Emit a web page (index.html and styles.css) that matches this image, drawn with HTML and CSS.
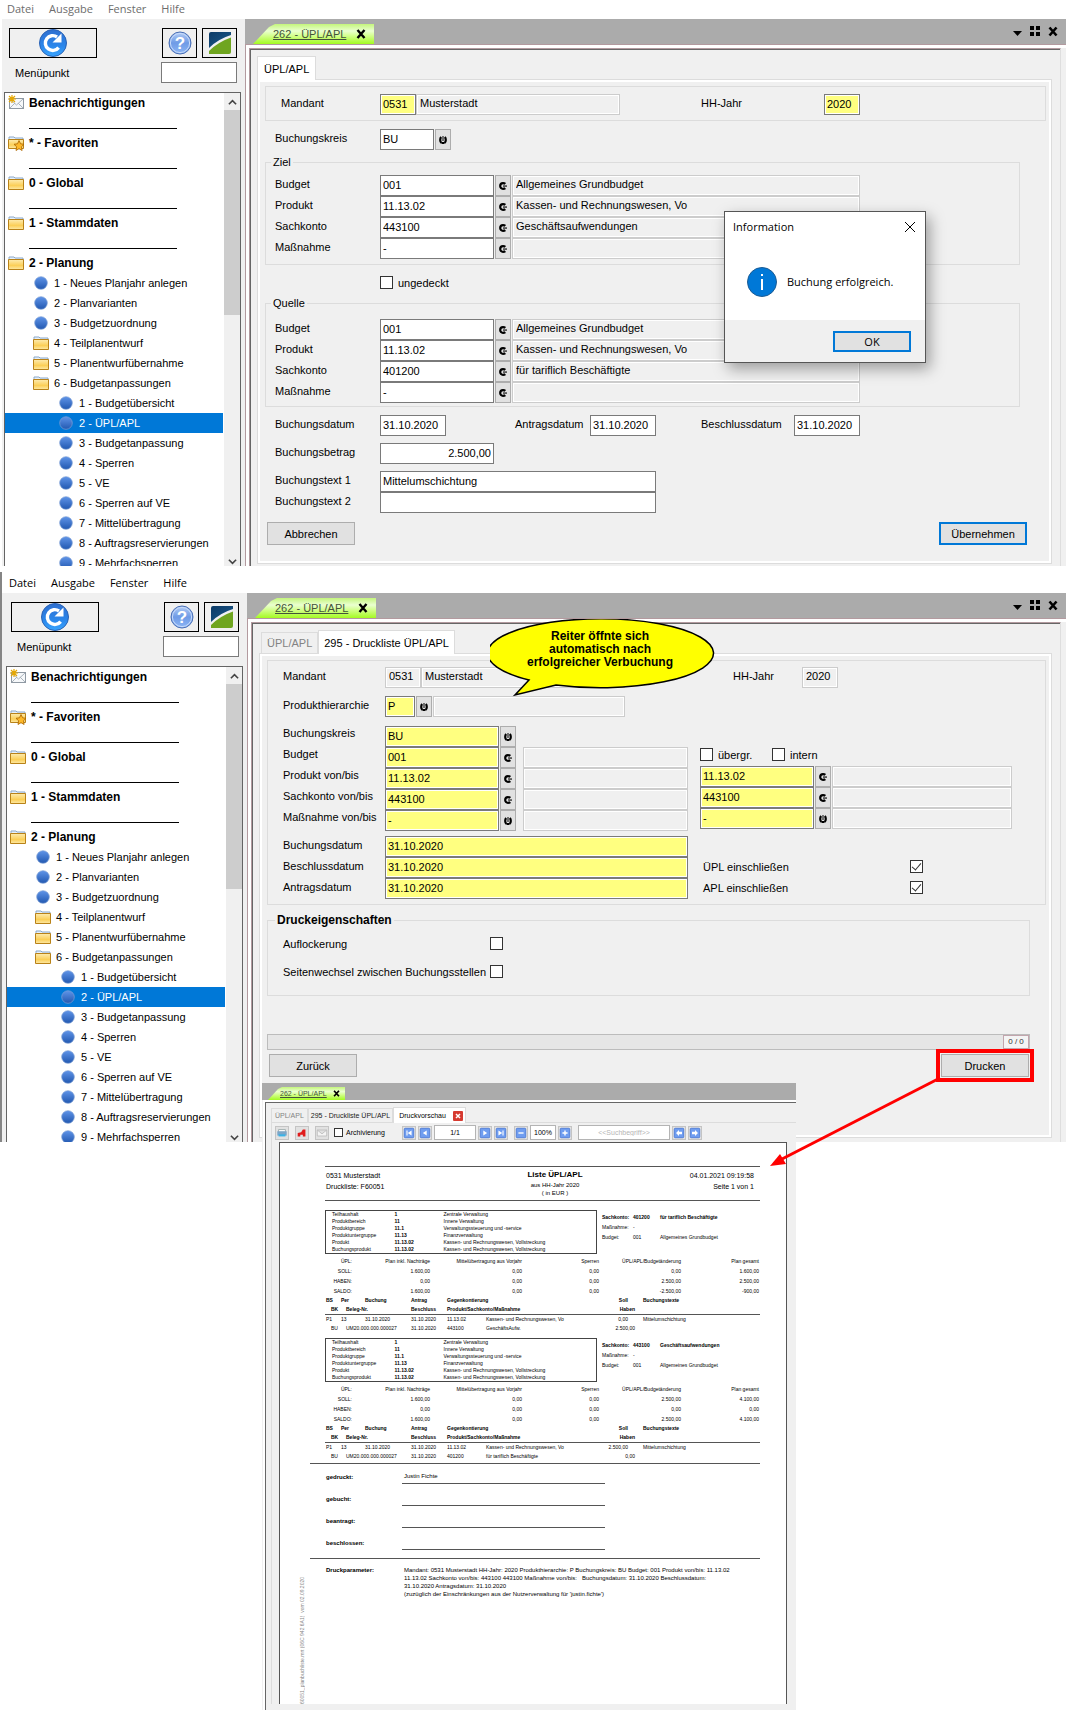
FILE: index.html
```html
<!DOCTYPE html>
<html lang="de">
<head>
<meta charset="utf-8">
<title>262 - ÜPL/APL</title>
<link rel="stylesheet" href="styles.css">
</head>
<body>
<svg class="sprite" aria-hidden="true">
  <defs>
    <linearGradient id="gBlue" x1="0" y1="0" x2="0" y2="1"><stop offset="0" stop-color="#2f6fd0"/><stop offset=".6" stop-color="#2b86ea"/><stop offset="1" stop-color="#39a5ff"/></linearGradient>
    <linearGradient id="gHelp" x1="0" y1="0" x2="0" y2="1"><stop offset="0" stop-color="#b4cdf5"/><stop offset=".5" stop-color="#6f9be6"/><stop offset="1" stop-color="#8db6f5"/></linearGradient>
    <linearGradient id="gBall" x1="0" y1="0" x2="0" y2="1"><stop offset="0" stop-color="#5f94e8"/><stop offset="1" stop-color="#2258b0"/></linearGradient>
    <linearGradient id="gFold" x1="0" y1="0" x2="0" y2="1"><stop offset="0" stop-color="#fdebb0"/><stop offset=".6" stop-color="#fbcf58"/><stop offset="1" stop-color="#fde9a6"/></linearGradient>
    <linearGradient id="gNavy" x1="0" y1="0" x2="1" y2="1"><stop offset="0" stop-color="#0c3a66"/><stop offset="1" stop-color="#1c5a8c"/></linearGradient>
  </defs>
  <symbol id="refresh" viewBox="0 0 28 28"><circle cx="14" cy="14" r="13.5" fill="url(#gBlue)" stroke="#2a62b4"/><path d="M19.600 18.600A7.400 7.400 0 1 1 18 8" fill="none" stroke="#fff" stroke-width="3.400"/><path d="M22.500 4.500v9h-9z" fill="#fff"/></symbol>
  <symbol id="logo" viewBox="0 0 24 24"><path d="M1 3q0-2 2-2h20v3Q10 8 1 17z" fill="url(#gNavy)"/><path d="M23 6.500v14.500q0 2-2 2H1v-3Q10 11 23 6.500z" fill="#6fa51f"/></symbol>
  <symbol id="mail" viewBox="0 0 16 16"><rect x="1.500" y="3.500" width="14" height="10" fill="#f6f8fa" stroke="#8f99a3"/><path d="M2 13l5-5M15 13l-5-5M2 4l6.500 6L15 4" fill="none" stroke="#aab3bc"/><path d="M4 0v8M0 4h8M1 1l6 6M7 1L1 7" stroke="#e6a700" stroke-width="1.200"/></symbol>
  <symbol id="folder" viewBox="0 0 16 16"><path d="M1 3.500V2h5l1 1h8v2H1z" fill="#e6f0fb" stroke="#8aa7c8"/><path d="M.5 4.500h15v10H.5z" fill="url(#gFold)" stroke="#b98218"/></symbol>
  <symbol id="favfolder" viewBox="0 0 16 16"><path d="M1 3.500V2h5l1 1h8v2H1z" fill="#e6f0fb" stroke="#8aa7c8"/><path d="M.5 4.500h15v9H.5z" fill="url(#gFold)" stroke="#b98218"/><path d="M11 5.500l1.600 3.300 3.400.5-2.500 2.400.6 3.800-3.100-1.800L8 15.500l.6-3.800L6 9.300l3.500-.5z" fill="#fdb92b" stroke="#a96400" stroke-width=".8"/></symbol>
  <symbol id="ball" viewBox="0 0 14 14"><circle cx="7" cy="7" r="6.300" fill="url(#gBall)" stroke="#7d9fd6" stroke-width=".7"/></symbol>
  <symbol id="up" viewBox="0 0 10 6"><path d="M1 5.500l4-4 4 4" fill="none" stroke="#444" stroke-width="1.800"/></symbol>
  <symbol id="down" viewBox="0 0 10 6"><path d="M1 .5l4 4 4-4" fill="none" stroke="#444" stroke-width="1.800"/></symbol>
  <symbol id="bandicons" viewBox="0 0 46 12"><path d="M0 5h9L4.500 10z"/><path d="M17 0h4v4h-4zM23 0h4v4h-4zM17 6h4v4h-4zM23 6h4v4h-4z"/><path d="M36.500 1.500l7 8M43.500 1.500l-7 8" stroke="#000" stroke-width="2.600"/></symbol>
  <symbol id="cross" viewBox="0 0 10 10"><path d="M1.500 1l7 8M8.500 1l-7 8" stroke="#000" stroke-width="2.400"/></symbol>
  <symbol id="lkright" viewBox="0 0 8 8"><path d="M6.300 1.900Q5.500 1.200 4 1.200A2.800 2.800 0 0 0 4 6.800Q5.500 6.800 6.300 6.100" fill="none" stroke="#000" stroke-width="2.200"/><path d="M4 3.500h4v1.100H4z"/></symbol>
  <symbol id="lkdown" viewBox="0 0 8 8"><path d="M2.200 1Q1.200 2 1.200 4T2.500 7M5.800 1Q6.800 2 6.800 4T5.500 7" fill="none" stroke="#000" stroke-width="2.200"/><path d="M3.500 0h1v5h-1zM2.500 6h3v2h-3z"/></symbol>
  <symbol id="printer" viewBox="0 0 14 14"><path d="M3 3h8v3H3z" fill="#fff" stroke="#9aa"/><path d="M1.500 5h11v5h-11z" fill="#7da6c8"/><path d="M3 8.500h8V11H3z" fill="#3bb3e6"/></symbol>
  <symbol id="pdf" viewBox="0 0 14 14"><path d="M2 11V7l4-1 2-3h3v8H8V9H5v2z" fill="#e01b1b"/></symbol>
  <symbol id="letter" viewBox="0 0 14 14"><path d="M1.500 3.500h11v7h-11zM1.500 3.500L7 8l5.500-4.500" fill="#f4f4f4" stroke="#bbb"/></symbol>
  <symbol id="first" viewBox="0 0 14 14"><rect x="1.500" y="1.500" width="11" height="11" rx="1" fill="#6f9df0" stroke="#4b7ad6"/><path d="M4 4h1.300v6H4zM10 4v6L5.500 7z" fill="#fff"/></symbol>
  <symbol id="prev" viewBox="0 0 14 14"><rect x="1.500" y="1.500" width="11" height="11" rx="1" fill="#6f9df0" stroke="#4b7ad6"/><path d="M9 4v6L4.500 7z" fill="#fff"/></symbol>
  <symbol id="next" viewBox="0 0 14 14"><rect x="1.500" y="1.500" width="11" height="11" rx="1" fill="#6f9df0" stroke="#4b7ad6"/><path d="M5 4v6l4.500-3z" fill="#fff"/></symbol>
  <symbol id="last" viewBox="0 0 14 14"><rect x="1.500" y="1.500" width="11" height="11" rx="1" fill="#6f9df0" stroke="#4b7ad6"/><path d="M8.700 4H10v6H8.700zM4 4v6l4.500-3z" fill="#fff"/></symbol>
  <symbol id="minus" viewBox="0 0 14 14"><rect x="1.500" y="1.500" width="11" height="11" rx="1" fill="#6f9df0" stroke="#4b7ad6"/><path d="M4 6.200h6v1.600H4z" fill="#fff"/></symbol>
  <symbol id="plus" viewBox="0 0 14 14"><rect x="1.500" y="1.500" width="11" height="11" rx="1" fill="#6f9df0" stroke="#4b7ad6"/><path d="M4 6.200h6v1.600H4zM6.200 4h1.600v6H6.200z" fill="#fff"/></symbol>
  <symbol id="left" viewBox="0 0 14 14"><rect x="1.500" y="1.500" width="11" height="11" rx="1" fill="#6f9df0" stroke="#4b7ad6"/><path d="M7 3.500v2h3.500v3H7v2L3.500 7z" fill="#fff"/></symbol>
  <symbol id="right" viewBox="0 0 14 14"><rect x="1.500" y="1.500" width="11" height="11" rx="1" fill="#6f9df0" stroke="#4b7ad6"/><path d="M7 3.500v2H3.500v3H7v2L10.500 7z" fill="#fff"/></symbol>
</svg>

<section class="window">
  <nav class="menubar menubar-dim"><a href="#">Datei</a><a href="#">Ausgabe</a><a href="#">Fenster</a><a href="#">Hilfe</a></nav>
  <div class="window-body">
    <aside class="sidebar">
      <div class="tools">
        <button class="tool tool-wide" aria-label="Aktualisieren"><svg class="i28"><use href="#refresh"/></svg></button>
        <button class="tool" aria-label="Hilfe"><svg class="i24" viewBox="0 0 24 24"><circle cx="12" cy="12" r="11" fill="url(#gHelp)" stroke="#4a6fb5"/><circle cx="12" cy="12" r="9.600" fill="none" stroke="#c9dcfa"/><text class="help-mark" x="12" y="18" text-anchor="middle">?</text></svg></button>
        <button class="tool" aria-label="Start"><svg class="i24"><use href="#logo"/></svg></button>
      </div>
      <div class="jump"><label for="mp1">Menüpunkt</label><input class="field" id="mp1"></div>
      <div class="tree">
        <ul>
          <li class="l1"><svg><use href="#mail"/></svg>Benachrichtigungen</li>
          <li class="rule"></li>
          <li class="l1"><svg><use href="#favfolder"/></svg>* - Favoriten</li>
          <li class="rule"></li>
          <li class="l1"><svg><use href="#folder"/></svg>0 - Global</li>
          <li class="rule"></li>
          <li class="l1"><svg><use href="#folder"/></svg>1 - Stammdaten</li>
          <li class="rule"></li>
          <li class="l1"><svg><use href="#folder"/></svg>2 - Planung</li>
          <li class="l2"><svg class="ball"><use href="#ball"/></svg>1 - Neues Planjahr anlegen</li>
          <li class="l2"><svg class="ball"><use href="#ball"/></svg>2 - Planvarianten</li>
          <li class="l2"><svg class="ball"><use href="#ball"/></svg>3 - Budgetzuordnung</li>
          <li class="l2"><svg><use href="#folder"/></svg>4 - Teilplanentwurf</li>
          <li class="l2"><svg><use href="#folder"/></svg>5 - Planentwurfübernahme</li>
          <li class="l2"><svg><use href="#folder"/></svg>6 - Budgetanpassungen</li>
          <li class="l3"><svg class="ball"><use href="#ball"/></svg>1 - Budgetübersicht</li>
          <li class="l3 selected"><svg class="ball"><use href="#ball"/></svg>2 - ÜPL/APL</li>
          <li class="l3"><svg class="ball"><use href="#ball"/></svg>3 - Budgetanpassung</li>
          <li class="l3"><svg class="ball"><use href="#ball"/></svg>4 - Sperren</li>
          <li class="l3"><svg class="ball"><use href="#ball"/></svg>5 - VE</li>
          <li class="l3"><svg class="ball"><use href="#ball"/></svg>6 - Sperren auf VE</li>
          <li class="l3"><svg class="ball"><use href="#ball"/></svg>7 - Mittelübertragung</li>
          <li class="l3"><svg class="ball"><use href="#ball"/></svg>8 - Auftragsreservierungen</li>
          <li class="l3"><svg class="ball"><use href="#ball"/></svg>9 - Mehrfachsperren</li>
        </ul>
        <div class="scrollbar"><svg><use href="#up"/></svg><div class="thumb"></div><svg class="sb-down"><use href="#down"/></svg></div>
      </div>
    </aside>
    <main class="main">
      <div class="band">
        <div class="doc-tab"><a href="#">262 - ÜPL/APL</a><svg><use href="#cross"/></svg></div>
        <svg class="band-icons"><use href="#bandicons"/></svg>
      </div>
      <div class="frame"><div class="frame-inner">
        <div class="tabs"><button class="tab active">ÜPL/APL</button></div>
        <form class="pane">
          <div class="group row">
            <label class="lab99" for="a1">Mandant</label><input class="field yellow w36" id="a1" value="0531"><input class="field ro w204" aria-label="Mandant Name" readonly value="Musterstadt">
            <label class="lab-hh" for="a2">HH-Jahr</label><input class="field yellow w36" id="a2" value="2020">
          </div>
          <div class="row inset mt8"><label class="lab105" for="a3">Buchungskreis</label><input class="field w54" id="a3" value="BU"><button type="button" class="look" aria-label="Auswahl"><svg><use href="#lkdown"/></svg></button></div>
          <fieldset class="mt5">
            <legend>Ziel</legend>
            <div class="row"><label class="lab105" for="b1">Budget</label><input class="field w114" id="b1" value="001"><button type="button" class="look" aria-label="Suchen"><svg><use href="#lkright"/></svg></button><input class="field ro w348" aria-label="Budget Text" readonly value="Allgemeines Grundbudget"></div>
            <div class="row"><label class="lab105" for="b2">Produkt</label><input class="field w114" id="b2" value="11.13.02"><button type="button" class="look" aria-label="Suchen"><svg><use href="#lkright"/></svg></button><input class="field ro w348" aria-label="Produkt Text" readonly value="Kassen- und Rechnungswesen, Vo"></div>
            <div class="row"><label class="lab105" for="b3">Sachkonto</label><input class="field w114" id="b3" value="443100"><button type="button" class="look" aria-label="Suchen"><svg><use href="#lkright"/></svg></button><input class="field ro w348" aria-label="Sachkonto Text" readonly value="Geschäftsaufwendungen"></div>
            <div class="row"><label class="lab105" for="b4">Maßnahme</label><input class="field w114" id="b4" value="-"><button type="button" class="look" aria-label="Suchen"><svg><use href="#lkright"/></svg></button><input class="field ro w348" aria-label="Maßnahme Text" readonly></div>
          </fieldset>
          <div class="uncovered"><label class="check"><input type="checkbox">ungedeckt</label></div>
          <fieldset class="source">
            <legend>Quelle</legend>
            <div class="row"><label class="lab105" for="c1">Budget</label><input class="field w114" id="c1" value="001"><button type="button" class="look" aria-label="Suchen"><svg><use href="#lkright"/></svg></button><input class="field ro w348" aria-label="Budget Text" readonly value="Allgemeines Grundbudget"></div>
            <div class="row"><label class="lab105" for="c2">Produkt</label><input class="field w114" id="c2" value="11.13.02"><button type="button" class="look" aria-label="Suchen"><svg><use href="#lkright"/></svg></button><input class="field ro w348" aria-label="Produkt Text" readonly value="Kassen- und Rechnungswesen, Vo"></div>
            <div class="row"><label class="lab105" for="c3">Sachkonto</label><input class="field w114" id="c3" value="401200"><button type="button" class="look" aria-label="Suchen"><svg><use href="#lkright"/></svg></button><input class="field ro w348" aria-label="Sachkonto Text" readonly value="für tariflich Beschäftigte"></div>
            <div class="row"><label class="lab105" for="c4">Maßnahme</label><input class="field w114" id="c4" value="-"><button type="button" class="look" aria-label="Suchen"><svg><use href="#lkright"/></svg></button><input class="field ro w348" aria-label="Maßnahme Text" readonly></div>
          </fieldset>
          <div class="row inset mt8">
            <label class="lab105" for="d1">Buchungsdatum</label><input class="field w66" id="d1" value="31.10.2020">
            <label class="lab-antrag" for="d2">Antragsdatum</label><input class="field w66" id="d2" value="31.10.2020">
            <label class="lab-beschl" for="d3">Beschlussdatum</label><input class="field w66" id="d3" value="31.10.2020">
          </div>
          <div class="row inset mt7"><label class="lab105" for="d4">Buchungsbetrag</label><input class="field w114 num" id="d4" value="2.500,00"></div>
          <div class="row inset mt7"><label class="lab105" for="d5">Buchungstext 1</label><input class="field w276" id="d5" value="Mittelumschichtung"></div>
          <div class="row inset"><label class="lab105" for="d6">Buchungstext 2</label><input class="field w276" id="d6"></div>
          <div class="actions"><button type="button" class="btn">Abbrechen</button><button type="button" class="btn primary">Übernehmen</button></div>
        </form>
      </div></div>
      <section class="dialog" role="dialog" aria-label="Information">
        <header><span>Information</span><button class="dialog-close" aria-label="Schließen"><svg viewBox="0 0 12 12"><path d="M1 1l10 10M11 1L1 11" stroke="#000"/></svg></button></header>
        <div class="dialog-text"><svg viewBox="0 0 30 30"><circle cx="15" cy="15" r="14.500" fill="#0078d7" stroke="#1d5c93"/><path d="M14 12h2v11h-2zM14 7h2v2h-2z" fill="#fff"/></svg><p>Buchung erfolgreich.</p></div>
        <footer><button class="btn primary ok">OK</button></footer>
      </section>
    </main>
  </div>
</section>

<section class="window second">
  <nav class="menubar"><a href="#">Datei</a><a href="#">Ausgabe</a><a href="#">Fenster</a><a href="#">Hilfe</a></nav>
  <div class="window-body">
    <aside class="sidebar">
      <div class="tools">
        <button class="tool tool-wide" aria-label="Aktualisieren"><svg class="i28"><use href="#refresh"/></svg></button>
        <button class="tool" aria-label="Hilfe"><svg class="i24" viewBox="0 0 24 24"><circle cx="12" cy="12" r="11" fill="url(#gHelp)" stroke="#4a6fb5"/><circle cx="12" cy="12" r="9.600" fill="none" stroke="#c9dcfa"/><text class="help-mark" x="12" y="18" text-anchor="middle">?</text></svg></button>
        <button class="tool" aria-label="Start"><svg class="i24"><use href="#logo"/></svg></button>
      </div>
      <div class="jump"><label for="mp2">Menüpunkt</label><input class="field" id="mp2"></div>
      <div class="tree">
        <ul>
          <li class="l1"><svg><use href="#mail"/></svg>Benachrichtigungen</li>
          <li class="rule"></li>
          <li class="l1"><svg><use href="#favfolder"/></svg>* - Favoriten</li>
          <li class="rule"></li>
          <li class="l1"><svg><use href="#folder"/></svg>0 - Global</li>
          <li class="rule"></li>
          <li class="l1"><svg><use href="#folder"/></svg>1 - Stammdaten</li>
          <li class="rule"></li>
          <li class="l1"><svg><use href="#folder"/></svg>2 - Planung</li>
          <li class="l2"><svg class="ball"><use href="#ball"/></svg>1 - Neues Planjahr anlegen</li>
          <li class="l2"><svg class="ball"><use href="#ball"/></svg>2 - Planvarianten</li>
          <li class="l2"><svg class="ball"><use href="#ball"/></svg>3 - Budgetzuordnung</li>
          <li class="l2"><svg><use href="#folder"/></svg>4 - Teilplanentwurf</li>
          <li class="l2"><svg><use href="#folder"/></svg>5 - Planentwurfübernahme</li>
          <li class="l2"><svg><use href="#folder"/></svg>6 - Budgetanpassungen</li>
          <li class="l3"><svg class="ball"><use href="#ball"/></svg>1 - Budgetübersicht</li>
          <li class="l3 selected"><svg class="ball"><use href="#ball"/></svg>2 - ÜPL/APL</li>
          <li class="l3"><svg class="ball"><use href="#ball"/></svg>3 - Budgetanpassung</li>
          <li class="l3"><svg class="ball"><use href="#ball"/></svg>4 - Sperren</li>
          <li class="l3"><svg class="ball"><use href="#ball"/></svg>5 - VE</li>
          <li class="l3"><svg class="ball"><use href="#ball"/></svg>6 - Sperren auf VE</li>
          <li class="l3"><svg class="ball"><use href="#ball"/></svg>7 - Mittelübertragung</li>
          <li class="l3"><svg class="ball"><use href="#ball"/></svg>8 - Auftragsreservierungen</li>
          <li class="l3"><svg class="ball"><use href="#ball"/></svg>9 - Mehrfachsperren</li>
        </ul>
        <div class="scrollbar"><svg><use href="#up"/></svg><div class="thumb"></div><svg class="sb-down"><use href="#down"/></svg></div>
      </div>
    </aside>
    <main class="main">
      <div class="band">
        <div class="doc-tab"><a href="#">262 - ÜPL/APL</a><svg><use href="#cross"/></svg></div>
        <svg class="band-icons"><use href="#bandicons"/></svg>
      </div>
      <div class="frame"><div class="frame-inner">
        <div class="tabs"><button class="tab">ÜPL/APL</button><button class="tab active">295 - Druckliste ÜPL/APL</button></div>
        <form class="pane print-pane">
          <div class="group">
            <div class="row"><label class="lab102" for="e1">Mandant</label><input class="field ro w36" id="e1" readonly value="0531"><input class="field ro w204" aria-label="Mandant Name" readonly value="Musterstadt"><label class="lab-hh2" for="e2">HH-Jahr</label><input class="field ro w36" id="e2" readonly value="2020"></div>
            <div class="row mt8"><label class="lab102" for="e3">Produkthierarchie</label><input class="field yellow w30" id="e3" value="P"><button type="button" class="look" aria-label="Auswahl"><svg><use href="#lkdown"/></svg></button><input class="field ro w192" aria-label="Produkthierarchie Text" readonly></div>
            <div class="columns">
              <div class="col-left">
                <div class="row tight"><label class="lab102" for="f1">Buchungskreis</label><input class="field yellow w114" id="f1" value="BU"><button type="button" class="look" aria-label="Auswahl"><svg><use href="#lkdown"/></svg></button></div>
                <div class="row tight"><label class="lab102" for="f2">Budget</label><input class="field yellow w114" id="f2" value="001"><button type="button" class="look" aria-label="Suchen"><svg><use href="#lkright"/></svg></button><input class="field ro spaced" aria-label="Budget Text" readonly></div>
                <div class="row tight"><label class="lab102" for="f3">Produkt von/bis</label><input class="field yellow w114" id="f3" value="11.13.02"><button type="button" class="look" aria-label="Suchen"><svg><use href="#lkright"/></svg></button><input class="field ro spaced" aria-label="Produkt Text" readonly></div>
                <div class="row tight"><label class="lab102" for="f4">Sachkonto von/bis</label><input class="field yellow w114" id="f4" value="443100"><button type="button" class="look" aria-label="Suchen"><svg><use href="#lkright"/></svg></button><input class="field ro spaced" aria-label="Sachkonto Text" readonly></div>
                <div class="row tight"><label class="lab102" for="f5">Maßnahme von/bis</label><input class="field yellow w114" id="f5" value="-"><button type="button" class="look" aria-label="Auswahl"><svg><use href="#lkdown"/></svg></button><input class="field ro spaced" aria-label="Maßnahme Text" readonly></div>
                <div class="row mt5"><label class="lab102" for="f6">Buchungsdatum</label><input class="field yellow grow" id="f6" value="31.10.2020"></div>
                <div class="row"><label class="lab102" for="f7">Beschlussdatum</label><input class="field yellow grow" id="f7" value="31.10.2020"></div>
                <div class="row"><label class="lab102" for="f8">Antragsdatum</label><input class="field yellow grow" id="f8" value="31.10.2020"></div>
              </div>
              <div class="col-right">
                <div class="checks"><label class="check"><input type="checkbox">übergr.</label><label class="check"><input type="checkbox">intern</label></div>
                <div class="row"><input class="field yellow w114" aria-label="Produkt bis" value="11.13.02"><button type="button" class="look" aria-label="Suchen"><svg><use href="#lkright"/></svg></button><input class="field ro grow" aria-label="Produkt bis Text" readonly></div>
                <div class="row"><input class="field yellow w114" aria-label="Sachkonto bis" value="443100"><button type="button" class="look" aria-label="Suchen"><svg><use href="#lkright"/></svg></button><input class="field ro grow" aria-label="Sachkonto bis Text" readonly></div>
                <div class="row"><input class="field yellow w114" aria-label="Maßnahme bis" value="-"><button type="button" class="look" aria-label="Auswahl"><svg><use href="#lkdown"/></svg></button><input class="field ro grow" aria-label="Maßnahme bis Text" readonly></div>
                <div class="includes">
                  <div class="include"><label for="g1">ÜPL einschließen</label><input type="checkbox" id="g1" checked></div>
                  <div class="include"><label for="g2">APL einschließen</label><input type="checkbox" id="g2" checked></div>
                </div>
              </div>
            </div>
          </div>
          <fieldset class="print-options">
            <legend>Druckeigenschaften</legend>
            <div class="option"><label for="h1">Auflockerung</label><input type="checkbox" id="h1"></div>
            <div class="option"><label for="h2">Seitenwechsel zwischen Buchungsstellen</label><input type="checkbox" id="h2"></div>
          </fieldset>
          <div class="progress"><progress value="0" max="1" aria-label="Fortschritt"></progress><output>0 / 0</output></div>
          <div class="actions"><button type="button" class="btn">Zurück</button>
            <div class="marked"><button type="button" class="btn">Drucken</button>
              <svg class="arrow" viewBox="0 0 172 92"><path d="M170 3L14 83" stroke="#f00" stroke-width="3"/><path d="M2 90l10-12 6 10z" fill="#f00"/></svg>
            </div>
          </div>
        </form>
      </div></div>
      <div class="callout">
        <svg viewBox="0 0 230 80"><path d="M39 61L25 76L66 66A113 34.500 0 1 0 39 61z" fill="#ff0" stroke="#000" stroke-width="1.500"/></svg>
        <p>Reiter öffnte sich<br>automatisch nach<br>erfolgreicher Verbuchung</p>
      </div>
    </main>
  </div>
</section>

<section class="preview">
  <div class="band"><div class="doc-tab"><a href="#">262 - ÜPL/APL</a><svg><use href="#cross"/></svg></div></div>
  <div class="preview-frame">
    <div class="tabs"><button class="tab">ÜPL/APL</button><button class="tab dark">295 - Druckliste ÜPL/APL</button><button class="tab active">Druckvorschau<svg viewBox="0 0 10 10"><rect width="10" height="10" rx="1" fill="#d63a30"/><path d="M3 3l4 4M7 3L3 7" stroke="#fff" stroke-width="1.500"/></svg></button></div>
    <div class="preview-pane">
      <div class="toolbar">
        <div class="tb-files">
          <button aria-label="Drucken"><svg><use href="#printer"/></svg></button><button aria-label="PDF"><svg><use href="#pdf"/></svg></button><button aria-label="E-Mail"><svg><use href="#letter"/></svg></button>
        </div>
        <label class="check small"><input type="checkbox">Archivierung</label>
        <div class="tb-set"><button aria-label="Erste Seite"><svg><use href="#first"/></svg></button><button aria-label="Vorherige Seite"><svg><use href="#prev"/></svg></button><input class="tb-page" aria-label="Seite" value="1/1"><button aria-label="Nächste Seite"><svg><use href="#next"/></svg></button><button aria-label="Letzte Seite"><svg><use href="#last"/></svg></button></div>
        <div class="tb-set"><button aria-label="Verkleinern"><svg><use href="#minus"/></svg></button><input class="tb-zoom" aria-label="Zoom" value="100%"><button aria-label="Vergrößern"><svg><use href="#plus"/></svg></button></div>
        <div class="tb-set"><input class="tb-search" aria-label="Suchbegriff" placeholder="&lt;&lt;Suchbegriff&gt;&gt;"><button aria-label="Zurück suchen"><svg><use href="#left"/></svg></button><button aria-label="Weiter suchen"><svg><use href="#right"/></svg></button></div>
      </div>
      <article class="sheet">
        <div class="stamp">60051_planbuchliste.mrt (06C 942 6A1)&nbsp; vom 02.09.2020</div>
        <div class="sheet-content">
          <header class="report-head">
            <div>0531 Musterstadt<br>Druckliste: F60051</div>
            <div class="report-title"><h1>Liste ÜPL/APL</h1><p>aus HH-Jahr 2020<br>( in EUR )</p></div>
            <div class="right">04.01.2021 09:19:58<br>Seite 1 von 1</div>
          </header>

          <section class="entry">
            <div class="entry-head">
              <table class="budget">
                <colgroup><col class="b1"><col class="b2"><col></colgroup>
                <tr><td>Teilhaushalt</td><th>1</th><td>Zentrale Verwaltung</td></tr>
                <tr><td>Produktbereich</td><th>11</th><td>Innere Verwaltung</td></tr>
                <tr><td>Produktgruppe</td><th>11.1</th><td>Verwaltungssteuerung und -service</td></tr>
                <tr><td>Produktuntergruppe</td><th>11.13</th><td>Finanzverwaltung</td></tr>
                <tr><td>Produkt</td><th>11.13.02</th><td>Kassen- und Rechnungswesen, Vollstreckung</td></tr>
                <tr><td>Buchungsprodukt</td><th>11.13.02</th><td>Kassen- und Rechnungswesen, Vollstreckung</td></tr>
              </table>
              <table class="account">
                <colgroup><col class="a1"><col class="a2"><col></colgroup>
                <tr><th>Sachkonto:</th><th>401200</th><th>für tariflich Beschäftigte</th></tr>
                <tr><td>Maßnahme:</td><td>-</td><td></td></tr>
                <tr><td>Budget:</td><td>001</td><td>Allgemeines Grundbudget</td></tr>
              </table>
            </div>
            <table class="sums">
              <colgroup><col class="s1"><col class="s2"><col class="s3"><col class="s4"><col class="s5"><col></colgroup>
              <tr><td>ÜPL:</td><td>Plan inkl. Nachträge</td><td>Mittelübertragung aus Vorjahr</td><td>Sperren</td><td>ÜPL/APL/Budgetänderung</td><td>Plan gesamt</td></tr>
              <tr><td>SOLL:</td><td>1.600,00</td><td>0,00</td><td>0,00</td><td>0,00</td><td>1.600,00</td></tr>
              <tr><td>HABEN:</td><td>0,00</td><td>0,00</td><td>0,00</td><td>2.500,00</td><td>2.500,00</td></tr>
              <tr><td>SALDO:</td><td>1.600,00</td><td>0,00</td><td>0,00</td><td>-2.500,00</td><td>-900,00</td></tr>
            </table>
            <table class="bookings">
              <colgroup><col class="k1"><col class="k2"><col class="k3"><col class="k4"><col class="k5"><col class="k6"><col class="k7"><col></colgroup>
              <thead>
                <tr><th>BS</th><th>Per</th><th>Buchung</th><th>Antrag</th><th colspan="2">Gegenkontierung</th><th class="debit">Soll</th><th>Buchungstexte</th></tr>
                <tr><th class="sub">BK</th><th class="sub" colspan="2">Beleg-Nr.</th><th>Beschluss</th><th colspan="2">Produkt/Sachkonto/Maßnahme</th><th class="credit">Haben</th><th></th></tr>
              </thead>
              <tbody>
                <tr><td>P1</td><td>13</td><td>31.10.2020</td><td>31.10.2020</td><td>11.13.02</td><td>Kassen- und Rechnungswesen, Vo</td><td class="debit">0,00</td><td>Mittelumschichtung</td></tr>
                <tr><td class="sub">BU</td><td class="sub" colspan="2">UM20.000.000.000027</td><td>31.10.2020</td><td>443100</td><td>GeschäftsAufw.</td><td class="credit">2.500,00</td><td></td></tr>
              </tbody>
            </table>
          </section>

          <section class="entry">
            <div class="entry-head">
              <table class="budget">
                <colgroup><col class="b1"><col class="b2"><col></colgroup>
                <tr><td>Teilhaushalt</td><th>1</th><td>Zentrale Verwaltung</td></tr>
                <tr><td>Produktbereich</td><th>11</th><td>Innere Verwaltung</td></tr>
                <tr><td>Produktgruppe</td><th>11.1</th><td>Verwaltungssteuerung und -service</td></tr>
                <tr><td>Produktuntergruppe</td><th>11.13</th><td>Finanzverwaltung</td></tr>
                <tr><td>Produkt</td><th>11.13.02</th><td>Kassen- und Rechnungswesen, Vollstreckung</td></tr>
                <tr><td>Buchungsprodukt</td><th>11.13.02</th><td>Kassen- und Rechnungswesen, Vollstreckung</td></tr>
              </table>
              <table class="account">
                <colgroup><col class="a1"><col class="a2"><col></colgroup>
                <tr><th>Sachkonto:</th><th>443100</th><th>Geschäftsaufwendungen</th></tr>
                <tr><td>Maßnahme:</td><td>-</td><td></td></tr>
                <tr><td>Budget:</td><td>001</td><td>Allgemeines Grundbudget</td></tr>
              </table>
            </div>
            <table class="sums">
              <colgroup><col class="s1"><col class="s2"><col class="s3"><col class="s4"><col class="s5"><col></colgroup>
              <tr><td>ÜPL:</td><td>Plan inkl. Nachträge</td><td>Mittelübertragung aus Vorjahr</td><td>Sperren</td><td>ÜPL/APL/Budgetänderung</td><td>Plan gesamt</td></tr>
              <tr><td>SOLL:</td><td>1.600,00</td><td>0,00</td><td>0,00</td><td>2.500,00</td><td>4.100,00</td></tr>
              <tr><td>HABEN:</td><td>0,00</td><td>0,00</td><td>0,00</td><td>0,00</td><td>0,00</td></tr>
              <tr><td>SALDO:</td><td>1.600,00</td><td>0,00</td><td>0,00</td><td>2.500,00</td><td>4.100,00</td></tr>
            </table>
            <table class="bookings">
              <colgroup><col class="k1"><col class="k2"><col class="k3"><col class="k4"><col class="k5"><col class="k6"><col class="k7"><col></colgroup>
              <thead>
                <tr><th>BS</th><th>Per</th><th>Buchung</th><th>Antrag</th><th colspan="2">Gegenkontierung</th><th class="debit">Soll</th><th>Buchungstexte</th></tr>
                <tr><th class="sub">BK</th><th class="sub" colspan="2">Beleg-Nr.</th><th>Beschluss</th><th colspan="2">Produkt/Sachkonto/Maßnahme</th><th class="credit">Haben</th><th></th></tr>
              </thead>
              <tbody>
                <tr><td>P1</td><td>13</td><td>31.10.2020</td><td>31.10.2020</td><td>11.13.02</td><td>Kassen- und Rechnungswesen, Vo</td><td class="debit">2.500,00</td><td>Mittelumschichtung</td></tr>
                <tr><td class="sub">BU</td><td class="sub" colspan="2">UM20.000.000.000027</td><td>31.10.2020</td><td>401200</td><td>für tariflich Beschäftigte</td><td class="credit">0,00</td><td></td></tr>
              </tbody>
            </table>
          </section>

          <dl class="signatures">
            <dt>gedruckt:</dt><dd>Justin Fichte</dd>
            <dt>gebucht:</dt><dd></dd>
            <dt>beantragt:</dt><dd></dd>
            <dt>beschlossen:</dt><dd></dd>
          </dl>
          <footer class="params">
            <strong>Druckparameter:</strong>
            <p>Mandant: 0531 Musterstadt HH-Jahr: 2020 Produkthierarchie: P Buchungskreis: BU Budget: 001 Produkt von/bis: 11.13.02<br>11.13.02 Sachkonto von/bis: 443100 443100 Maßnahme von/bis: &nbsp; Buchungsdatum: 31.10.2020 Beschlussdatum:<br>31.10.2020 Antragsdatum: 31.10.2020<br>(zuzüglich der Einschränkungen aus der Nutzerverwaltung für 'justin.fichte')</p>
          </footer>
        </div>
      </article>
    </div>
  </div>
</section>
</body>
</html>
```
FILE: styles.css
```css
* { box-sizing: border-box; }

body {
  margin: 0;
  background: #fff;
  color: #000;
  font: 11px/14px "Liberation Sans", Arial, sans-serif;
}

.sprite { position: absolute; width: 0; height: 0; }
svg { display: block; flex: none; }
button, input { font: inherit; color: inherit; margin: 0; }
button { padding: 0; }
p, dl, dd, h1 { margin: 0; }

/* ---------- window ---------- */
.window { border-left: 2px solid #fff; }
.second { margin-top: 6px; border-left-color: #858585; }

.menubar {
  display: flex;
  gap: 15px;
  height: 19px;
  padding-left: 5px;
  font: 11px/18px "Open Sans", "Noto Sans", sans-serif;
}
.second .menubar { height: 21px; padding: 2px 0 0 7px; }
.menubar a { color: #000; text-decoration: none; }
.menubar-dim a { color: #6d6d6d; }

.window-body { display: flex; background: #f0f0f0; }

/* ---------- sidebar ---------- */
.sidebar { display: flex; flex-direction: column; flex: none; width: 243px; padding-top: 9px; }
.second .sidebar { width: 245px; padding-left: 2px; }

.tools { display: flex; gap: 5px; padding: 0 8px 0 7px; }
.tool {
  display: flex;
  align-items: center;
  justify-content: center;
  width: 35px;
  height: 30px;
  border: 1px solid #000;
  background: #f0f0f0;
}
.tool-wide { width: 88px; margin-right: auto; padding-right: 1px; }
.i28 { width: 28px; height: 28px; }
.i24 { width: 24px; height: 24px; }
.help-mark { fill: #fff; font-size: 17px; font-weight: bold; }

.jump { display: flex; justify-content: space-between; padding: 4px 8px 8px 13px; }
.jump label { padding-top: 1px; line-height: 21px; }
.jump .field { width: 76px; }

.tree {
  display: flex;
  flex: 1;
  contain: size;
  overflow: hidden;
  margin: 0 4px 0 2px;
  border: 1px solid #646464;
  border-bottom: 0;
  background: #fff;
}
.tree ul { flex: 1; margin: 0 1px 0 0; padding: 0; list-style: none; }
.tree li { display: flex; align-items: center; gap: 5px; height: 20px; white-space: nowrap; }
.tree svg { width: 16px; height: 16px; }
.tree .ball { width: 14px; height: 14px; margin: 0 1px; }
.tree .l1 { padding-left: 3px; font-size: 12px; font-weight: bold; }
.tree .l2 { padding-left: 28px; }
.tree .l3 { padding-left: 53px; }
.tree .rule { width: 148px; height: 16px; margin: 0 0 4px 24px; border-bottom: 1px solid #000; }
.tree .selected { background: #0078d7; color: #fff; }

.scrollbar { display: flex; flex-direction: column; align-items: center; width: 16px; background: #f0f0f0; }
.scrollbar svg { width: 9px; height: 6px; margin: 6px 0 5px; }
.scrollbar .thumb { width: 100%; height: 205px; background: #cdcdcd; }
.scrollbar .sb-down { margin: auto 0 1px; }

/* ---------- main area ---------- */
.main { position: relative; flex: 1; min-width: 0; }

.band { display: flex; align-items: flex-end; justify-content: space-between; height: 25px; padding: 0 8px; background: #ababab; }
.band-icons { width: 46px; height: 12px; margin: 0 -1px 6px 0; }
.doc-tab {
  display: flex;
  align-items: center;
  justify-content: space-between;
  width: 121px;
  height: 20px;
  padding: 0 8px 0 20px;
  background: linear-gradient(#c4f57c, #eaffd0 35%, #d2ff8a 60%, #a4fb22);
  clip-path: polygon(0 100%, 16px 3px, 22px 0, 100% 0, 100% 100%);
}
.doc-tab a { color: #44533a; }
.doc-tab svg { width: 10px; height: 10px; }

.frame {
  padding: 3px 5px 0 3px;
  border: solid #b39a9f;
  border-width: 1px 0 0 1px;
  box-shadow: inset 3px 3px 0 #fff;
}
.frame-inner {
  padding: 7px 8px 2px 7px;
  border: 1px solid #b39a9f;
  border-right-color: #dedede;
  border-bottom: 0;
  box-shadow: inset 1px 1px 0 #666;
}
.second .frame-inner { padding-bottom: 4px; }

.tabs { display: flex; align-items: flex-end; }
.tab {
  height: 21px;
  margin-left: 2px;
  padding: 0 5px;
  border: 1px solid #dcdcdc;
  border-bottom: 0;
  background: #f0f0f0;
  color: #838383;
  white-space: nowrap;
}
.tab.active { position: relative; height: 24px; margin: 0 0 -1px; padding: 0 6px; background: #fff; color: #000; }
.second .tab.active { padding: 0 5px; }

.pane {
  padding: 6px 5px 18px 7px;
  border: 1px solid #dcdcdc;
  box-shadow: inset 0 0 0 2px #fff;
}
.print-pane { padding-bottom: 60px; }

/* ---------- form parts ---------- */
.group, fieldset { border: 1px solid #dcdcdc; }
.group { padding: 7px 15px 5px; }
.print-pane .group { padding-top: 6px; }

fieldset { min-width: 0; margin: 0 26px 0 0; padding: 6px 9px 5px; }
fieldset.source { margin-top: 7px; padding: 9px 9px 3px; }
legend { height: 14px; margin-left: -4px; padding: 0 2px; }

.row { display: flex; align-items: flex-start; }
.row label { flex: none; line-height: 18px; white-space: nowrap; }
.row.tight label { line-height: 14px; }
.inset { padding-left: 10px; }
.mt5 { margin-top: 5px; }
.mt7 { margin-top: 7px; }
.mt8 { margin-top: 8px; }
.lab99 { width: 99px; }
.lab102 { width: 102px; }
.lab105 { width: 105px; }
.lab-hh { width: 123px; margin-left: 81px; }
.lab-hh2 { width: 69px; margin-left: 108px; }
.lab-antrag { width: 75px; margin-left: 69px; }
.lab-beschl { width: 93px; margin-left: 45px; }

.field {
  flex: none;
  height: 21px;
  padding: 0 2px 2px;
  border: 1px solid #7a7a7a;
  border-radius: 0;
  background: #fff;
  outline: none;
}
.yellow { background: #ffff80; box-shadow: inset 0 0 0 1px #fff; }
.ro { padding: 0 3px 3px; border-color: #ccc; background: #f0f0f0; box-shadow: inset 0 0 0 1px #fff; }
.num { text-align: right; }
.w30 { width: 30px; }
.w36 { width: 36px; }
.w54 { width: 54px; }
.w66 { width: 66px; }
.w114 { width: 114px; }
.w192 { width: 192px; }
.w204 { width: 204px; }
.w276 { width: 276px; }
.w348 { width: 348px; }
.grow { flex: 1; min-width: 0; }
.spaced { flex: 1; min-width: 0; margin-left: 6px; }

.look {
  display: flex;
  align-items: center;
  justify-content: center;
  flex: none;
  width: 16px;
  height: 21px;
  margin: 0 1px;
  border: 1px solid #adadad;
  background: #e1e1e1;
}
.look svg { width: 8px; height: 8px; }

input[type="checkbox"] {
  appearance: none;
  display: flex;
  justify-content: center;
  flex: none;
  width: 13px;
  height: 13px;
  border: 1px solid #333;
  background: #fff;
}
input[type="checkbox"]:checked::after {
  content: "";
  width: 4px;
  height: 8px;
  border: solid #333;
  border-width: 0 1px 1px 0;
  transform: rotate(40deg);
}
.check { display: flex; align-items: center; gap: 5px; height: 13px; }
.uncovered { display: flex; margin-top: 11px; padding-left: 115px; }

.btn { width: 88px; height: 23px; border: 1px solid #adadad; background: #e1e1e1; }
.btn.primary { border: 2px solid #0078d7; }
.actions { display: flex; justify-content: space-between; margin-top: 9px; padding: 0 19px 0 2px; }
.print-pane .actions { margin-top: 4px; padding-right: 17px; }

.columns { display: flex; gap: 12px; margin-top: 9px; }
.col-left { flex: none; width: 405px; }
.col-right { flex: 1; max-width: 312px; padding-top: 22px; }
.checks { display: flex; gap: 17px; margin-bottom: 5px; }
.checks .check { min-width: 55px; }
.includes { margin-top: 27px; padding-left: 3px; }
.include { display: flex; align-items: center; height: 21px; }
.include label { width: 207px; line-height: 18px; }

.print-options { display: grid; gap: 15px; margin: 8px 16px 0 0; padding: 10px 15px 17px; }
.print-options legend { margin-left: -8px; font-size: 12px; font-weight: bold; }
.option { display: flex; align-items: center; height: 13px; }
.option label { width: 207px; white-space: nowrap; }

.progress { display: flex; height: 16px; margin: 38px 16px 0 0; border: 1px solid #bcbcbc; background: #e6e6e6; }
.progress progress { appearance: none; flex: 1; height: 14px; border: 0; background: #e6e6e6; }
.progress progress::-webkit-progress-bar { background: #e6e6e6; }
.progress output { width: 26px; border: 1px solid #c2a5ad; background: #f4f4f4; color: #333; font-size: 8px; line-height: 12px; text-align: center; }

/* ---------- dialog ---------- */
.dialog {
  position: absolute;
  top: 192px;
  left: 479px;
  width: 202px;
  border: 1px solid #555;
  background: #fff;
  box-shadow: 4px 6px 14px rgba(0, 0, 0, .35);
  font-family: "Open Sans", "Noto Sans", sans-serif;
}
.dialog header { display: flex; align-items: center; justify-content: space-between; height: 30px; padding: 0 9px 0 8px; }
.dialog-close { width: 12px; height: 12px; border: 0; background: none; }
.dialog-text { display: flex; align-items: center; gap: 10px; height: 78px; padding: 2px 0 0 22px; }
.dialog-text svg { width: 30px; height: 30px; }
.dialog footer { display: flex; justify-content: flex-end; padding: 11px 14px 10px; background: #f0f0f0; }
.ok { width: 78px; height: 21px; line-height: 16px; }

/* ---------- annotations ---------- */
.callout { position: absolute; top: 26px; left: 243px; width: 230px; }
.callout svg { width: 230px; height: 80px; }
.callout p { position: absolute; top: 11px; left: 0; width: 220px; font-size: 12px; font-weight: bold; line-height: 13px; text-align: center; }

.marked { position: relative; }
.marked .btn { display: block; outline: 4px solid #f00; outline-offset: 1px; }
.arrow { position: absolute; z-index: 2; top: 22px; left: -173px; width: 172px; height: 92px; }

/* ---------- print preview ---------- */
.preview {
  position: relative;
  z-index: 1;
  margin: -59px 270px 0 262px;
  background: #f0f0f0;
  font-size: 7px;
  line-height: 10px;
}
.preview .band { height: 17px; padding: 0 6px; }
.preview .doc-tab { width: 77px; height: 13px; padding: 0 5px 0 12px; clip-path: polygon(0 100%, 10px 2px, 14px 0, 100% 0, 100% 100%); }
.preview .doc-tab svg { width: 7px; height: 7px; }
.preview-frame {
  margin: 2px 0 0 3px;
  padding: 4px 0 6px 5px;
  border: solid #666;
  border-width: 1px 0 0 1px;
  outline: 2px solid #fff;
  clip-path: inset(-2px 0 0 -3px);
}
.preview .tab { height: 14px; margin-left: 0; padding: 0 3px; }
.preview .tab.dark { padding: 0 2px; color: #222; }
.preview .tab.active { display: flex; align-items: center; gap: 7px; height: 16px; padding: 0 2px 0 5px; }
.preview .tab svg { width: 10px; height: 10px; }
.preview-pane { border: solid #dcdcdc; border-width: 1px 0 0 1px; }

.toolbar { display: flex; align-items: center; height: 19px; padding-left: 3px; }
.toolbar button { width: 14px; height: 14px; border: 1px solid #c4c4c4; background: #e1e1e1; }
.toolbar button svg { width: 12px; height: 12px; }
.toolbar input { height: 15px; padding: 0; border: 1px solid #b4b4b4; background: #fff; text-align: center; outline: none; }
.toolbar input::placeholder { color: #b5b5b5; }
.toolbar input[type="checkbox"] { width: 9px; height: 9px; border-color: #333; }
.tb-files { display: flex; gap: 6px; }
.check.small { gap: 3px; width: 73px; padding-left: 5px; }
.tb-set { display: flex; align-items: center; gap: 2px; margin-right: 6px; }
.tb-page { width: 42px; }
.tb-zoom { width: 26px; }
.tb-search { width: 92px; }

.sheet {
  display: grid;
  grid-template-columns: 30px 1fr;
  margin: 0 9px 0 7px;
  border: 1px solid #555;
  border-bottom: 0;
  background: #fff;
  color: #000;
  font-size: 5px;
  line-height: 7px;
}
.stamp { align-self: end; justify-self: start; margin-left: 19px; color: #888; white-space: nowrap; writing-mode: vertical-rl; transform: rotate(180deg); }
.sheet-content { padding: 23px 26px 106px 0; }
.sheet table { border-collapse: collapse; table-layout: fixed; }
.sheet th, .sheet td { padding: 0; text-align: left; white-space: nowrap; }

.report-head {
  display: grid;
  grid-template-columns: 1fr auto 1fr;
  height: 35px;
  margin-left: 15px;
  padding: 3px 6px 0 1px;
  border: solid #555;
  border-width: 1px 0;
  font-size: 7px;
  line-height: 11px;
}
.report-title { margin: -1px 0 0 30px; font-size: 6px; line-height: 8px; text-align: center; }
.report-title h1 { font-size: 8px; line-height: 12px; }
.right { text-align: right; }

.entry { margin: 9px 0 0 15px; }
.entry + .entry { margin-top: 5px; }
.entry-head { display: flex; align-items: flex-start; }
.budget { width: 272px; border: 1px solid #444; }
.budget tr { height: 7px; }
.budget td:first-child { padding-left: 6px; }
.b1 { width: 69px; }
.b2 { width: 49px; }
.account { width: 158px; margin: 2px 0 0 5px; line-height: 10px; }
.a1 { width: 31px; }
.a2 { width: 27px; }

.sums { width: 100%; margin-top: 2px; line-height: 10px; }
.sheet .sums td { text-align: right; padding-right: 1px; }
.s1 { width: 28px; }
.s2 { width: 78px; }
.s3 { width: 92px; }
.s4 { width: 77px; }
.s5 { width: 82px; }

.bookings { width: 100%; line-height: 9px; }
.bookings tbody { border-top: 1px solid #555; }
.sheet .bookings th, .sheet .bookings td { padding-left: 1px; }
.sheet .bookings .sub { padding-left: 6px; }
.k1 { width: 15px; }
.k2 { width: 24px; }
.k3 { width: 46px; }
.k4 { width: 36px; }
.k5 { width: 39px; }
.k6 { width: 107px; }
.k7 { width: 50px; }
.sheet .bookings .debit { padding-right: 14px; text-align: right; }
.sheet .bookings .credit { padding-right: 7px; text-align: right; }

.signatures {
  display: grid;
  grid-template-columns: 76px 203px;
  grid-template-rows: 20px 22px 22px 22px;
  margin-top: 2px;
  padding: 0 0 8px 16px;
  border: solid #555;
  border-width: 1px 0;
  font-size: 6px;
  line-height: 14px;
}
.signatures dt { align-self: end; font-weight: bold; }
.signatures dd { display: flex; align-items: flex-end; padding-left: 2px; border-bottom: 1px solid #555; }

.params { display: grid; grid-template-columns: 78px 1fr; padding: 7px 0 0 16px; font-size: 6px; line-height: 8px; white-space: nowrap; }
```
